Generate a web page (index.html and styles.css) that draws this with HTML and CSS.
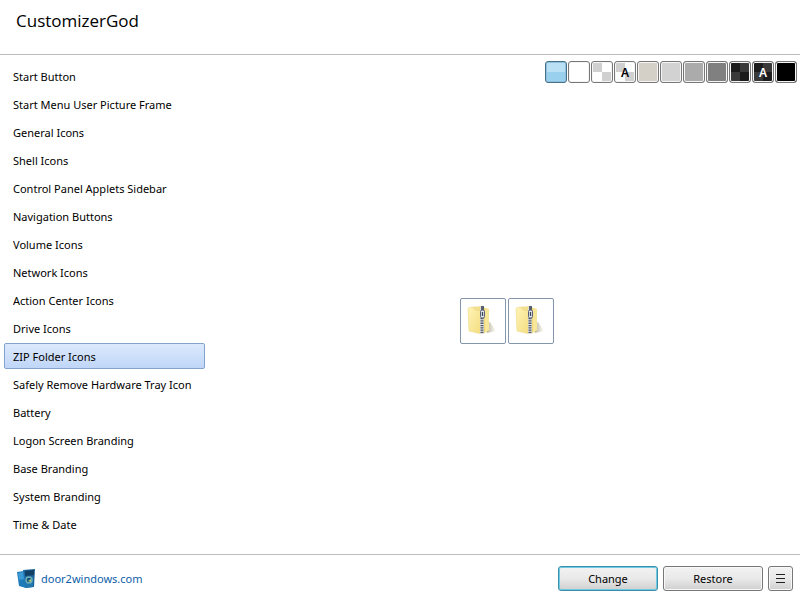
FILE: index.html
```
<!DOCTYPE html>
<html lang="en">
    <head>
        <meta charset="utf-8">
        <title>CustomizerGod</title>
        <link rel="stylesheet" href="styles.css">
    </head>
    <body>
        <header class="title-bar"><h1>CustomizerGod</h1></header>

        <main class="content">
            <nav class="sidebar">
                <button class="item">Start Button</button>
                <button class="item">Start Menu User Picture Frame</button>
                <button class="item">General Icons</button>
                <button class="item">Shell Icons</button>
                <button class="item">Control Panel Applets Sidebar</button>
                <button class="item">Navigation Buttons</button>
                <button class="item">Volume Icons</button>
                <button class="item">Network Icons</button>
                <button class="item">Action Center Icons</button>
                <button class="item">Drive Icons</button>
                <button class="item selected">ZIP Folder Icons</button>
                <button class="item">Safely Remove Hardware Tray Icon</button>
                <button class="item">Battery</button>
                <button class="item">Logon Screen Branding</button>
                <button class="item">Base Branding</button>
                <button class="item">System Branding</button>
                <button class="item">Time &amp; Date</button>
            </nav>

            <section class="preview">
                <div class="swatches">
                    <button class="swatch active" aria-label="Blue"></button>
                    <button class="swatch white" aria-label="White"></button>
                    <button class="swatch checker" aria-label="Light checker"></button>
                    <button class="swatch checker" aria-label="Light checker with text">A</button>
                    <button class="swatch sand" aria-label="Sand"></button>
                    <button class="swatch silver" aria-label="Silver"></button>
                    <button class="swatch gray" aria-label="Gray"></button>
                    <button class="swatch dim" aria-label="Dark gray"></button>
                    <button class="swatch checker dark" aria-label="Dark checker"></button>
                    <button class="swatch checker dark" aria-label="Dark checker with text">A</button>
                    <button class="swatch black" aria-label="Black"></button>
                </div>
                <div class="icons">
                    <button class="tile" aria-label="ZIP folder">
                        <svg width="32" height="32" viewBox="0 0 32 32">
                            <defs>
                                <linearGradient id="front" x1="0" x2="1" y1="0" y2="1">
                                    <stop offset="0" stop-color="#fff4b8"/>
                                    <stop offset="1" stop-color="#f3dc7c"/>
                                </linearGradient>
                                <linearGradient id="shade" x1="0" x2="1">
                                    <stop offset="0" stop-color="#b9b394"/>
                                    <stop offset="1" stop-color="#fff"/>
                                </linearGradient>
                            </defs>
                            <g id="zip-folder">
                                <path d="M20 28l9-2-6-9-4 2z" fill="url(#shade)"/>
                                <path d="M4 2l11-1v26L4 26z" fill="#f3e08f"/>
                                <path d="M15 2l7 2v21l-6 4z" fill="#f0d977"/>
                                <path d="M18 4l4 0v21l-4 2z" fill="#f8e699"/>
                                <path d="M1 3l5-1 2 3 6 1 1 23L2 26z" fill="url(#front)" stroke="#ead27b" stroke-width=".5"/>
                                <path d="M15 2v27" stroke="#e3e2de" stroke-width="4"/>
                                <path d="M15 13v16" stroke="#545b69" stroke-width="3" stroke-dasharray="1.3 1"/>
                                <path d="M14 1h3v5h-3z" fill="#596171"/>
                                <rect x="13.5" y="5" width="4" height="8" rx="1.5" fill="#dfe3e8" stroke="#596274"/>
                                <path d="M15.5 7v4" stroke="#40495a" stroke-width="1.3"/>
                            </g>
                        </svg>
                    </button>
                    <button class="tile" aria-label="ZIP folder, alternate">
                        <svg width="32" height="32" viewBox="0 0 32 32"><use href="#zip-folder"/></svg>
                    </button>
                </div>
            </section>
        </main>

        <footer class="bottom-bar">
            <a class="site" href="#">
                <svg width="20" height="20" viewBox="0 0 20 20">
                    <path d="M7 1l12-1-1 18-9 1z" fill="#1b6499"/>
                    <path d="M9 2l9-1v5l-9 1z" fill="#123f63"/>
                    <path d="M10 8h7v10l-8 1z" fill="#2277ae"/>
                    <path d="M1 3l7-1 2 17-7-2z" fill="#1f7ab8"/>
                    <path d="M2 4l5-1 1 7-5 1z" fill="#3c9ad4"/>
                    <circle cx="13" cy="11" r="3" fill="#15527c" stroke="#6fb0b8" stroke-width="1.4"/>
                    <path d="M12 12l3-2v3z" fill="#b3cd69"/>
                </svg>
                door2windows.com
            </a>
            <button class="action default">Change</button>
            <button class="action">Restore</button>
            <button class="action menu" aria-label="Menu">
                <svg width="9" height="9" viewBox="0 0 9 9"><path d="M0 .5h9M0 4.5h9M0 8.5h9" stroke="#222"/></svg>
            </button>
        </footer>
    </body>
</html>
```
FILE: styles.css
```
* {
    box-sizing: border-box;
}
body {
    margin: 0;
    min-height: 100vh;
    display: flex;
    flex-direction: column;
    background-color: white;
    color: black;
    font: 11px/16px "Noto Sans", "Open Sans", sans-serif;
}
button {
    margin: 0;
    padding: 0;
    font: inherit;
    color: inherit;
}
.title-bar {
    padding: 9px 16px 21px;
    border-bottom: 1px solid #bcbcbc;
}
h1 {
    margin: 0;
    font: 17px/24px "Open Sans", sans-serif;
}
.content {
    flex: 1;
    display: flex;
}
.sidebar {
    width: 214px;
    padding: 8px 9px 8px 4px;
    display: flex;
    flex-direction: column;
    gap: 2px;
}
.item {
    height: 26px;
    padding: 2px 8px 0;
    border: 1px solid transparent;
    border-radius: 2px;
    background: none;
    text-align: left;
    white-space: nowrap;
}
.item.selected {
    border-color: #84a3cc;
    background: linear-gradient(#dce9fc, #c0d6f8);
}
.preview {
    flex: 1;
    display: flex;
    flex-direction: column;
}
.swatches {
    display: flex;
    justify-content: flex-end;
    gap: 1px;
    padding: 6px 3px 4px;
}
.swatch {
    width: 22px;
    height: 22px;
    padding: 2px 1px 0;
    border: 1px solid #777;
    border-radius: 3px;
    box-shadow: inset 0 0 0 1px #f5f5f5;
    font-size: 12px;
    font-weight: 600;
}
.active {
    border-color: #44708a;
    background: linear-gradient(#b9e0f4 50%, #98d0ee 50%);
    box-shadow: inset 0 0 0 1px #8fc0dc;
}
.white { background-color: white; }
.sand { background-color: #d4d0c8; }
.silver { background-color: #d2d2d2; }
.gray { background-color: #ababab; }
.dim { background-color: #808080; }
.black { background-color: black; }
.checker {
    background: conic-gradient(#fff 25%, #d0d0d0 0 50%, #fff 0 75%, #d0d0d0 0);
}
.checker.dark {
    background: conic-gradient(#3a3a3a 25%, #1c1c1c 0 50%, #3a3a3a 0 75%, #1c1c1c 0);
    color: white;
}
.icons {
    flex: 1;
    display: flex;
    justify-content: center;
    align-items: center;
    gap: 2px;
}
.tile {
    width: 46px;
    height: 46px;
    border: 1px solid #8496aa;
    border-radius: 2px;
    background-color: white;
}
.tile svg {
    display: block;
    margin: 0 auto;
}
.bottom-bar {
    display: flex;
    align-items: center;
    gap: 5px;
    padding: 11px 7px 9px 16px;
    border-top: 1px solid #bcbcbc;
}
.site {
    display: flex;
    align-items: center;
    gap: 5px;
    margin-right: auto;
    color: #0d5ea8;
    text-decoration: none;
}
.action {
    width: 100px;
    height: 25px;
    border: 1px solid #777;
    border-radius: 3px;
    background: linear-gradient(#f2f2f2, #e9e9e9 50%, #cfcfcf);
    box-shadow: inset 0 0 0 1px #f8f8f8;
}
.action.default {
    border-color: #3c8dab;
    box-shadow: inset 0 0 0 1px #6fcbe3;
}
.action.menu {
    width: 25px;
}
.menu svg {
    display: block;
    margin: 0 auto;
}
```
